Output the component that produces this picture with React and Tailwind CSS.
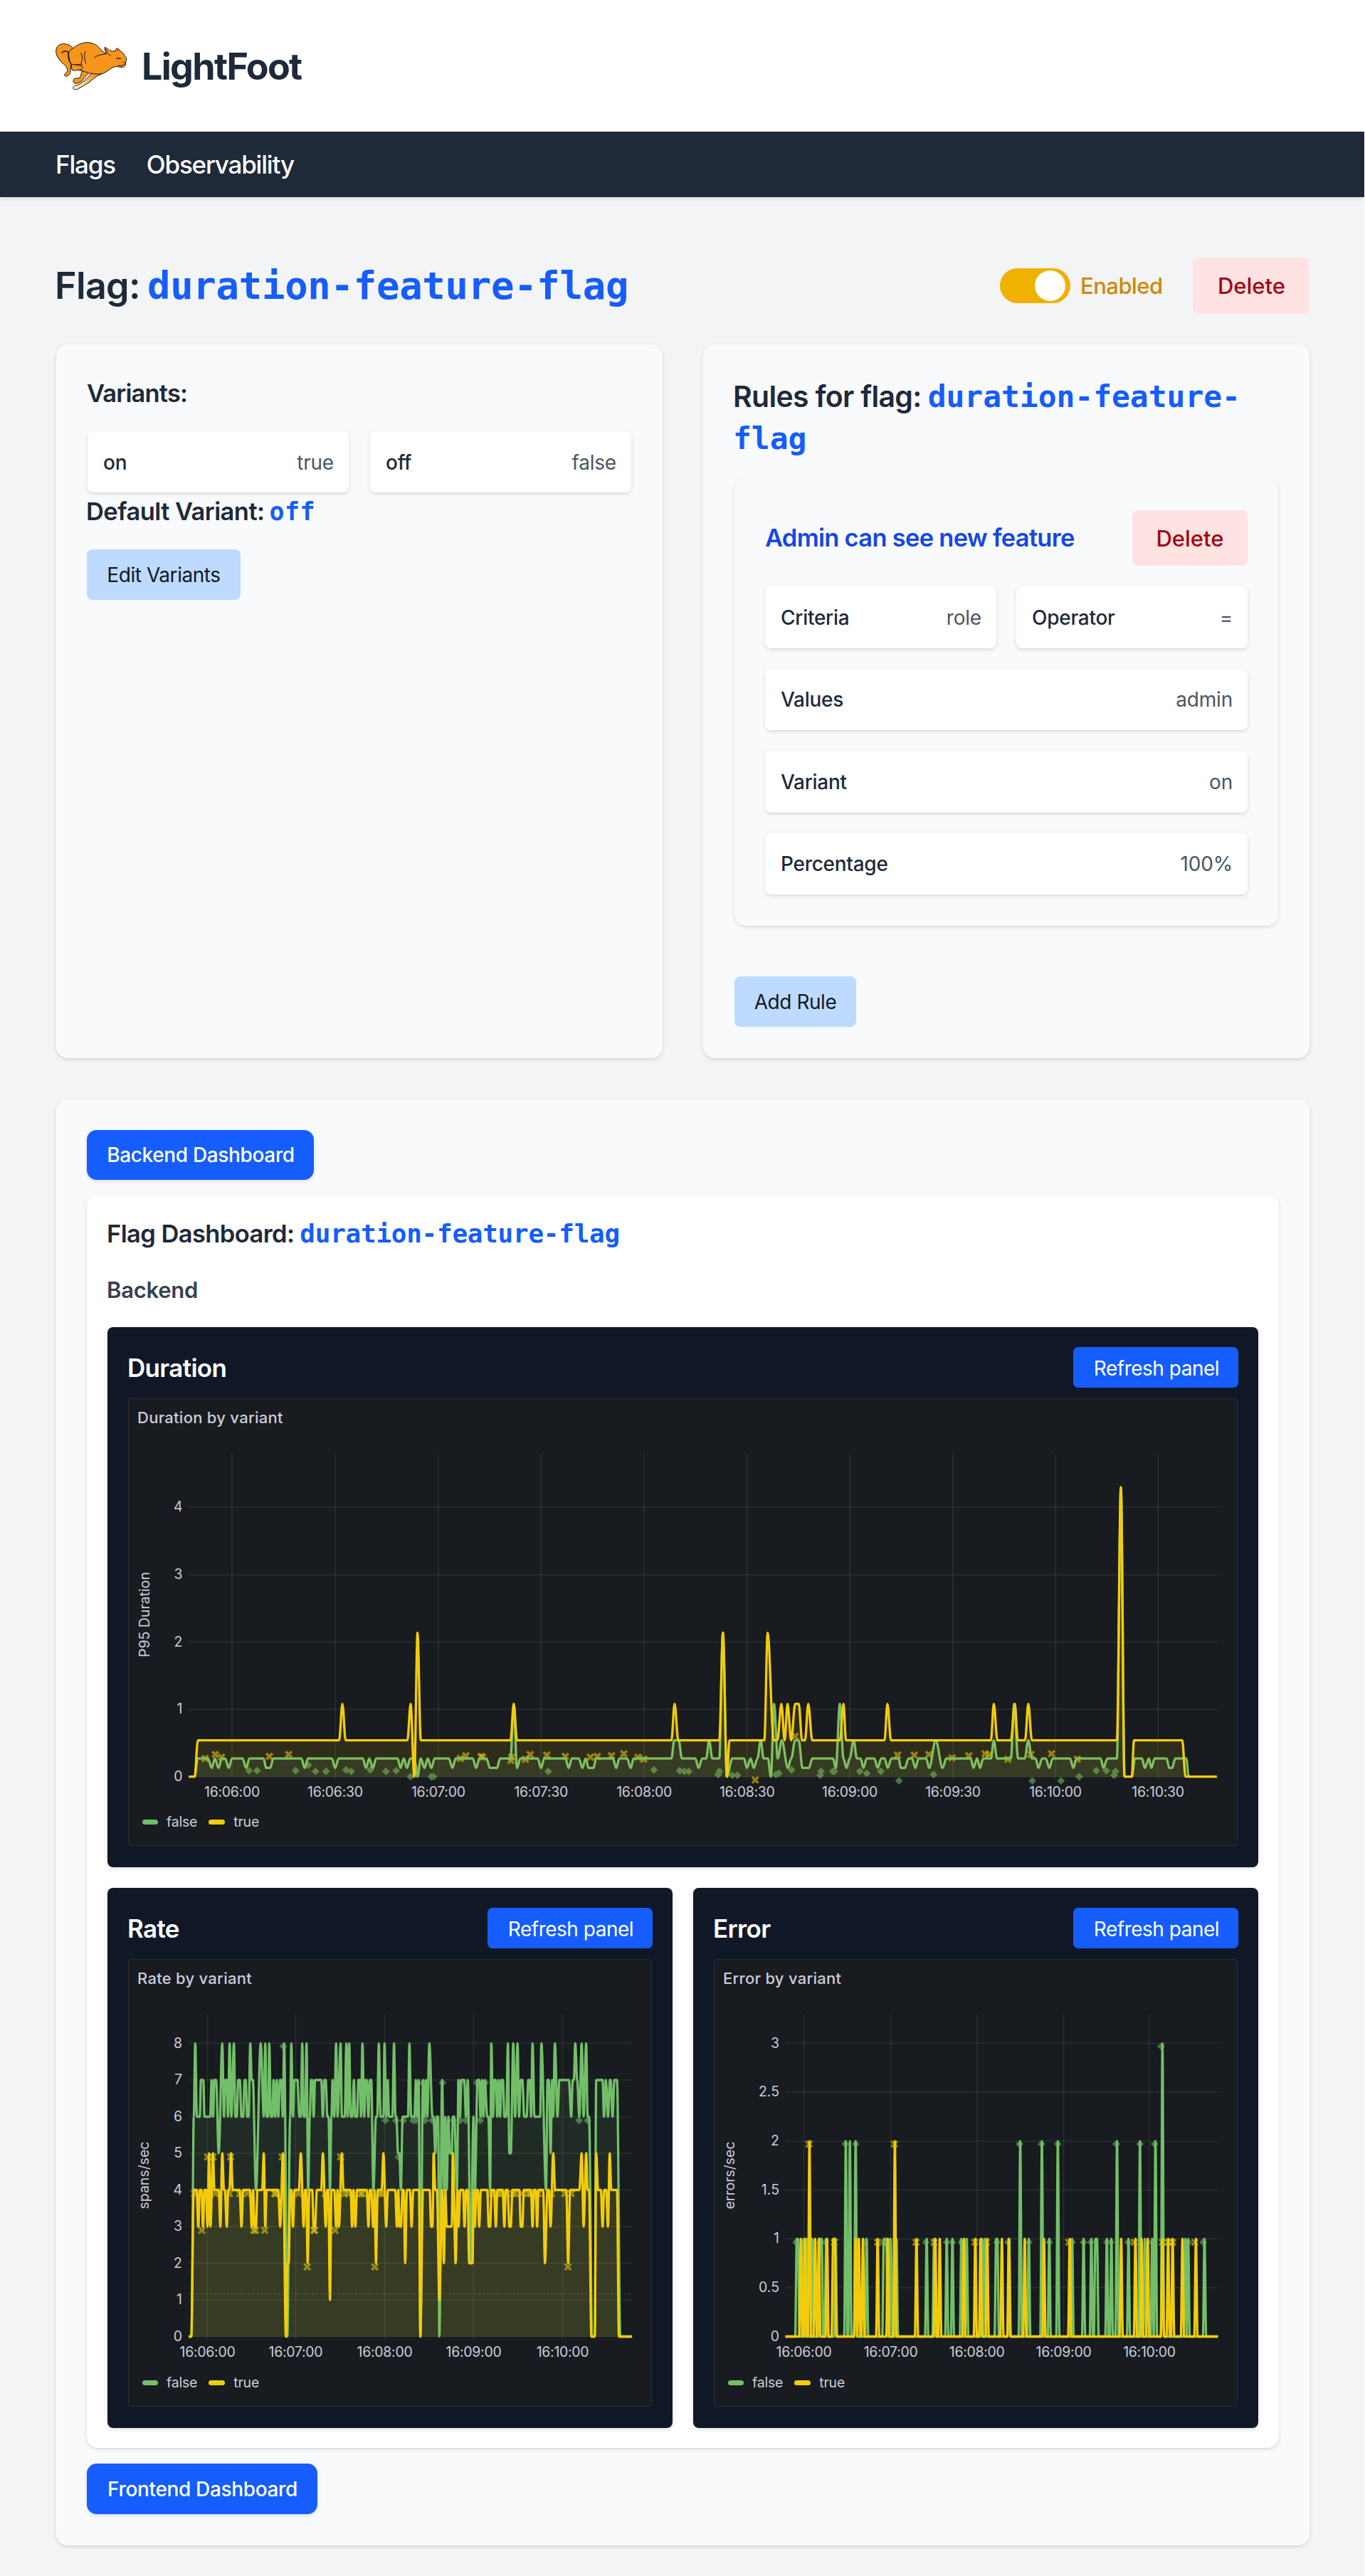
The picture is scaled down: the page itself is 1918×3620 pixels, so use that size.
import React from "react";

/* ---------- series data: "value:x" or "value:from-to" ---------- */

const durationFalse =
  "0:225-241 .27:250-278 .13:288 .27:297 .13:307 .27:316-325 .13:335 .27:344-373 .13:383 .27:392-431 .13:438-449 .27:458-535 .13:544 .27:553-619 .13:628 .27:638-704 .13:713 .27:722 .13:732 .27:741-800 .13:808 .27:817 .13:826 .27:835-846 0:855 .27:864 .13:874 .27:883 .13:893 .27:902-941 .13:951 .27:960-1007 .13:1016 .27:1026-1045 .13:1054-1074 .27:1082-1111 1.08:1120 .13:1129 .27:1138-1186 .13:1195 .27:1204-1262 .13:1271 .27:1280-1299 .13:1309 .27:1318 .13:1326-1340 .27:1346-1393 .13:1402 .27:1411-1432 .13:1442 .27:1450-1554 .54:1562-1574 .27:1583-1620 .13:1629 .27:1639-1650 .54:1658 .27:1667-1686 2.14:1696 0:1707 .27:1722-1754 .13:1762 .27:1772 .13:1781 .27:1791 .54:1800 .27:1808-1820 0:1828 1.08:1837 .27:1847 .54:1858 .13:1875 .27:1884 .54:1895-1905 .13:1915-1933 .27:1942-1999 .13:2007 1.08:2018 .27:2028 .13:2036 .27:2045 .54:2056 .27:2065-2075 .13:2083 .27:2092-2113 .13:2122 .27:2132-2141 .13:2150 .27:2160-2180 .13:2186-2197 .27:2207-2217 .13:2226 .27:2235-2256 .13:2264 .54:2282 .13:2301 .27:2311-2378 .13:2386 .27:2396 .13:2404 .27:2413-2434 .54:2442 .27:2451-2489 1.08:2498 .27:2509-2527 .54:2537 .27:2547-2557 .13:2565 .27:2575-2585 .13:2595 .27:2604-2652 .13:2661 .27:2670-2736 .13:2744 .27:2755-2781 4.3:2792 0:2802-2822 .27:2831-2850 .13:2858 .27:2869 .13:2876 .27:2885-2918 .13:2925-2933 .27:2942-2972 0:2979-3056";
const durationTrue =
  "0:225-241 .54:250-639 1.08:648 .54:657-827 1.08:836 0:846 2.14:855 .54:864-1111 1.08:1120 .54:1129-1554 1.08:1563 .54:1573-1686 2.14:1696 0:1707 .54:1714-1810 2.14:1819 .54:1836-1846 1.08:1857 .54:1866 1.08:1874 .54:1884 1.08:1895-1905 .54:1914-1922 1.08:1931 .54:1942-2018 1.08:2028 .54:2035-2141 1.08:2149 .54:2159-2434 1.08:2442 .54:2452-2489 1.08:2500 .54:2508-2528 1.08:2537 .54:2547-2781 4.3:2792 0:2802-2822 .54:2828-2961 0:2970-3056";
const durationFalseMarks =
  ".09:391 .09:413 .09:519 .17:554 .08:574 .08:603 .1:658 .08:672 .1:725 .08:768 .09:796 0:836 .13:850 0:893 0:899 .08:1215 .1:1506 .09:1577 .08:1590 .08:1602 .03:1683 .08:1686 .02:1722 .02:1736 .03:1842 .05:1850 .1:1885 .02:1964 .08:1966 .08:1999 .08:2003 .08:2073 .05:2092 .08:2131 -.06:2181 .03:2276 -.06:2548 -.06:2627 0:2677 .09:2724 .09:2752 .02:2773 .08:2777";
const durationTrueMarks =
  ".27:270 .33:298 .29:315 .3:447 .33:500 .27:973 .31:988 .3:1030 .29:1034 .24:1112 .29:1114 .26:1152 .33:1165 .32:1211 .3:1262 .29:1331 .3:1350 .31:1389 .34:1423 .29:1462 .26:1478 -.05:1785 .6:1895 .32:2177 .32:2223 .33:2263 .28:2327 .31:2373 .34:2418 .33:2430 .26:2481 .33:2544 .34:2601 .26:2672";

const rateFalse =
  "0:15-27 6:37 8:43 6:50-62 7:67-77 6:82-106 7:112 6:118 7:124-131 5:142 8:157 6:164 7:170-176 6:181 8:188 6:195 8:206 6:212-218 7:224-231 6:238-245 7:251-256 6:262-268 8:275 7:281-286 4:299 8:319 6:332 8:338 6:344-350 8:355 6:362-368 7:373 6:380 7:386 6:393 7:400-406 6:412 8:418 0:431 6:443 8:448 6:455 7:461-474 6:482-488 8:494 6:500-506 8:512 4:519 6:526 7:531-537 6:542 7:548-574 6:581 7:587-593 6:600-605 4:611 6:617 7:622 6:629 8:637 6:643 8:656 6:661-673 8:680 6:685 8:692 6:698-705 7:712 6:718-725 7:731-737 6:742 8:748 6:755 7:761-766 6:773 7:779-785 4:794 6:805-810 8:817 6:824-836 8:841 6:848 7:854 6:860-874 8:881 6:887-891 5:898-904 4:910 6:917-940 8:946 6:953-967 7:973 6:979 7:985 0:992 7:1003 6:1008 7:1015 6:1021 8:1030 6:1043-1048 5:1055 6:1061-1067 0:1072 7:1084 4:1091 6:1097 4:1103 6:1110 5:1117-1124 6:1129-1135 4:1146 7:1153 6:1159 7:1165-1177 6:1184 7:1192 2:1204 6:1216 4:1222 7:1233-1240 6:1246 7:1252 6:1258 7:1264 6:1274-1279 4:1286 8:1291 6:1298 7:1304-1310 6:1316 7:1322 6:1328 7:1334-1340 6:1346-1354 8:1361 5:1367-1373 8:1384 6:1391 8:1402 6:1408 7:1415-1422 6:1430-1440 7:1447-1453 6:1459 8:1465 6:1473-1497 8:1502 4:1522 7:1528-1534 5:1541 7:1547 6:1552 8:1559 6:1570 7:1578-1618 6:1628 7:1634-1639 8:1645 7:1653 6:1662 8:1672 6:1680 8:1691 6:1697-1703 0:1716-1727 7:1733-1760 6:1766 7:1774 6:1783 7:1791-1794 6:1802 7:1810-1821 0:1835-1884";
const rateTrue =
  "0:15-26 4:37-49 3:56 4:62-69 3:76 4:82-88 3:95 5:101 3:107 5:118 4:124-142 3:149 5:157 4:164-168 3:176 4:182-187 5:194 4:201-230 3:238 4:245-274 3:281 4:287 3:293-299 4:305-325 5:332 3:338 4:344-393 3:401 5:413 0:425-427 2:431-437 4:443-448 3:455 4:461-480 5:488 3:500 4:506-511 2:517 4:524-536 3:542-548 4:556-574 5:581 3:593 4:599-604 1:611 4:617-629 3:637 4:643 3:649 5:661 4:668-698 3:704 4:710 3:718 4:725-766 3:773 4:779-785 3:793-797 4:799 2:805 4:812-829 5:836 3:848 4:855-886 3:893 4:899 3:904-910 4:917-922 2:928 4:935-948 3:955 4:962-986 0:992 4:1003-1031 3:1037-1043 5:1048 4:1055-1062 1:1072 4:1084 2:1091 4:1097 3:1103-1124 5:1129 2:1141 4:1148 3:1153 4:1160-1172 3:1178 4:1185-1191 2:1198-1212 4:1216 3:1222 4:1228-1234 3:1240 4:1247-1274 3:1280-1286 4:1292-1303 3:1310 4:1317-1339 3:1346 4:1352-1360 3:1367-1373 4:1380-1409 3:1415-1422 4:1428-1458 3:1465 4:1471-1478 3:1484 4:1490-1510 2:1517 4:1528-1534 3:1541 5:1552 4:1560-1607 2:1615 4:1623-1662 5:1672 3:1680 5:1691 4:1697-1703 0:1713-1727 5:1733 4:1741-1753 3:1760 4:1767-1775 3:1783 5:1790 4:1797-1821 0:1829-1884";
const rateFalseMarks =
  "7.92:414 5.9:845 5.9:889 5.9:920 5.9:961 5.9:973 5.9:1012 5.9:1042 6.92:1001 6.92:1085 6.92:1160 6.92:1230 6.92:1266 5.9:1130 5.9:1160 5.9:1184 5.9:1244 4.9:900 3.9:1195 5.9:1661 5.9:1697";
const rateTrueMarks =
  "4.9:95 4.9:118 4.9:192 4.9:410 4.9:656 3.9:40 3.9:128 3.9:187 3.9:230 3.9:262 3.9:378 3.9:382 3.9:478 3.9:590 3.9:672 3.9:688 3.9:740 3.9:748 3.9:822 3.9:830 3.9:1290 3.9:1320 3.9:1330 3.9:1350 3.9:1380 3.9:1392 3.9:1420 3.9:1444 3.9:1455 3.9:1490 3.9:1545 3.9:1601 3.9:1628 2.9:71 2.9:290 2.9:297 2.9:336 2.9:544 2.9:545 2.9:632 1.9:515 1.9:800 1.9:1614";

const errorFalse =
  "1:278-281 1:295 1:302 1:316 1:335-339 1:350 1:373 2:398 2:408 2:422 1:449 1:491-497 1:508 1:522 1:596 1:614 1:645 1:659 1:681 1:694 1:731 1:738 1:766-769 1:798 2:825 1:846 2:878 1:896 2:917 1:952 1:980 1:999 1:1009-1013 1:1037 1:1048 2:1062 1:1090 2:1118 1:1130 1:1148 2:1156 3:1173 1:1229 1:1236 1:1276";
const errorTrue =
  "1:288 1:298 2:309 1:323 1:332 1:352 1:367-371 1:422 1:430 1:440 1:476 1:501 2:518 1:571 1:617 1:628 1:687 1:715 1:728 1:744 1:780 1:797 1:836 1:883 1:946 1:1072 1:1107 1:1122 1:1137 1:1173 1:1187 1:1198 1:1222 1:1255";
const errorFalseMarks =
  ".965:276 .965:295 .965:316 .965:335 .965:348 .965:445 .965:491 .965:594 .965:645 .965:659 .965:681 .965:731 .965:768 .965:795 .965:846 .965:896 .965:952 .965:980 .965:998 .965:1037 .965:1047 .965:1089 .965:1148 .965:1229 .965:1236 .965:1273 1.97:397 1.97:422 1.97:823 1.97:877 1.97:917 1.97:1060 1.97:1118 1.97:1154 2.97:1170";
const errorTrueMarks =
  "1.97:308 1.97:517 .965:370 .965:476 .965:500 .965:570 .965:614 .965:685 .965:714 .965:742 .965:944 .965:1104 .965:1173 .965:1187 .965:1198 .965:1252";

const parse = (s) =>
  s.split(" ").flatMap((token) => {
    const m = token.match(/^(-?[\d.]+):(\d+)(?:-(\d+))?$/);
    const v = Number(m[1]);
    return m[3] ? [[Number(m[2]), v], [Number(m[3]), v]] : [[Number(m[2]), v]];
  });

// Isolated samples that return to zero on both sides.
const spikes = (s, from, to) => {
  const pts = [[from, 0]];
  s.split(" ").forEach((token) => {
    const p = parse(token);
    pts.push([p[0][0] - 4, 0], ...p, [p[p.length - 1][0] + 4, 0]);
  });
  pts.push([to, 0]);
  return pts;
};

const charts = {
  duration: {
    title: "Duration by variant",
    axis: "P95 Duration",
    w: 1558,
    x: (v) => v / 1.96 - 30,
    zero: 531.7,
    unit: 94.6,
    left: 84.5,
    right: 1531,
    labelX: 76,
    yTicks: ["0", "1", "2", "3", "4"],
    xTicks: [
      ["16:06:00", 145.5], ["16:06:30", 290.4], ["16:07:00", 435.3], ["16:07:30", 579.7], ["16:08:00", 724.6],
      ["16:08:30", 869.2], ["16:09:00", 1013.5], ["16:09:30", 1158.5], ["16:10:00", 1302.5], ["16:10:30", 1446.6],
    ],
    series: [parse(durationFalse), parse(durationTrue)],
    marks: [parse(durationFalseMarks), parse(durationTrueMarks)],
    axisMid: 304,
  },
  rate: {
    title: "Rate by variant",
    axis: "spans/sec",
    w: 736,
    x: (v) => v / 3 + 80,
    zero: 530.5,
    unit: 51.5,
    left: 84.5,
    right: 709,
    labelX: 76,
    threshold: 470.5,
    yTicks: ["0", "1", "2", "3", "4", "5", "6", "7", "8"],
    xTicks: [["16:06:00", 111.5], ["16:07:00", 235.5], ["16:08:00", 360.5], ["16:09:00", 485.5], ["16:10:00", 610.5]],
    series: [parse(rateFalse), parse(rateTrue)],
    marks: [parse(rateFalseMarks), parse(rateTrueMarks)],
    axisMid: 304,
  },
  error: {
    title: "Error by variant",
    axis: "errors/sec",
    w: 736,
    x: (v) => v / 1.742 - 43,
    zero: 530.5,
    unit: 137.3,
    left: 100.5,
    right: 708.5,
    labelX: 92,
    yTicks: ["0", "0.5", "1", "1.5", "2", "2.5", "3"],
    xTicks: [["16:06:00", 126.5], ["16:07:00", 248.6], ["16:08:00", 369.7], ["16:09:00", 491.5], ["16:10:00", 612]],
    series: [spikes(errorFalse, 250, 1309), spikes(errorTrue, 250, 1309)],
    marks: [parse(errorFalseMarks), parse(errorTrueMarks)],
    axisMid: 304,
  },
};

const GREEN = "#73bf69";
const YELLOW = "#f2cc0c";

// Cubic segments with flat tangents, which round off peaks and plateaus.
const smooth = (pts) =>
  pts
    .map(([px, py], i) => {
      if (i === 0) return `M${px} ${py}`;
      const [qx, qy] = pts[i - 1];
      const k = (px - qx) * 0.35;
      return `C${(qx + k).toFixed(1)} ${qy.toFixed(1)} ${(px - k).toFixed(1)} ${py.toFixed(1)} ${px.toFixed(1)} ${py.toFixed(1)}`;
    })
    .join("");

function Chart({ c }) {
  const y = (v) => c.zero - v * c.unit;
  const d = c.series.map((pts) => smooth(pts.map(([px, v]) => [c.x(px), y(v)])));
  const [diamonds, crosses] = c.marks;
  return (
    <svg className="-mt-px -ml-[1.5px] block h-[627px] w-full overflow-visible font-[Inter,sans-serif]" viewBox={`0 0 ${c.w - 2} 627`} fill="none">
      <g stroke="rgb(240 250 255 / 0.09)" strokeWidth="1.5">
        {c.yTicks.map((t) => (
          <path key={t} d={`M${c.left} ${y(Number(t))}H${c.right}`} />
        ))}
        {c.xTicks.map(([t, px]) => (
          <path key={t} d={`M${px} 78V${c.zero + 5}`} />
        ))}
      </g>
      <g fill="#ccccdc" className="text-[19.5px]">
        {c.yTicks.map((t) => (
          <text key={t} x={c.labelX} y={y(Number(t)) + 6} textAnchor="end">{t}</text>
        ))}
        {c.xTicks.map(([t, px]) => (
          <text key={t} x={px} y={c.zero + 28.3} textAnchor="middle" letterSpacing="-0.3">{t}</text>
        ))}
        <text transform={`translate(29 ${c.axisMid}) rotate(-90)`} textAnchor="middle">{c.axis}</text>
      </g>
      <g fill={GREEN} opacity="0.55">
        {diamonds.map(([px, v], i) => (
          <path key={i} d={`M${c.x(px) - 5.5} ${y(v)}l5.5-5.5 5.5 5.5-5.5 5.5z`} />
        ))}
      </g>
      <g stroke={YELLOW} strokeWidth="3.6">
        {crosses.map(([px, v], i) => (
          <path key={i} opacity="0.55" d={`M${c.x(px) - 4.3} ${y(v) - 4.3}l8.6 8.6m0-8.6l-8.6 8.6`} />
        ))}
      </g>
      {[GREEN, YELLOW].map((color, i) => (
        <React.Fragment key={color}>
          <path d={`${d[i]}V${c.zero}H${c.left}z`} fill={color} fillOpacity="0.1" />
          <path d={d[i]} stroke={color} strokeWidth="3.3" strokeLinejoin="round" />
        </React.Fragment>
      ))}
      {c.threshold && <path d={`M${c.left} ${c.threshold}H${c.right}`} stroke="#8e8e8e" strokeOpacity="0.5" strokeDasharray="3 3" />}
    </svg>
  );
}

function Panel({ heading, chart, className }) {
  return (
    <section className={`h-[759px] rounded-lg bg-[#101828] px-[29px] pt-7 shadow-[0_2px_6px_rgba(0,0,0,0.12)] ${className}`}>
      <div className="flex h-[57px] items-center justify-between">
        <h4 className="-ml-px pt-0.5 text-[35px] leading-none font-semibold tracking-[-0.67px] text-white">{heading}</h4>
        <button className="-mr-px flex h-[57px] w-[232px] items-center justify-center rounded-[7px] bg-[#155dfc] pt-0.5 pl-0.5 text-[28px] leading-none tracking-[-0.49px] whitespace-nowrap text-white">
          Refresh panel
        </button>
      </div>
      <div className="relative mt-[15px] h-[629px] rounded-[4px] border border-[#2c2f35] bg-[#181b1f]">
        <div className="absolute top-[13px] left-3 text-[22px] leading-[26px] font-medium tracking-[0.27px] text-[#ccccdc]">{chart.title}</div>
        <Chart c={chart} />
        <div className="absolute top-[580px] left-[19px] flex items-center text-[19.5px] leading-[28px] tracking-[-0.2px] text-[#ccccdc]">
          <span className="mr-3 h-[7px] w-[22px] rounded-full bg-[#73bf69]" />
          false
          <span className="mr-3 ml-4 h-[7px] w-[23px] rounded-full bg-[#f2cc0c]" />
          true
        </div>
      </div>
    </section>
  );
}

const Code = ({ children, className }) => (
  <code className={`font-['DejaVu_Sans_Mono',monospace] leading-[0] font-bold text-[#155dfc] ${className}`}>{children}</code>
);

const cardShadow = "shadow-[0_2px_6px_rgba(0,0,0,0.1),0_2px_4px_-2px_rgba(0,0,0,0.1)]";

function Field({ label, value, className = "" }) {
  return (
    <div className={`flex items-center justify-between rounded-lg bg-white px-[22px] pt-px text-[28px] leading-none ${cardShadow} ${className}`}>
      <span className="font-medium tracking-[-0.28px] text-[#1e2939]">{label}</span>
      <span className="-mr-px tracking-[-0.2px] text-[#4a5565]">{value}</span>
    </div>
  );
}

function SoftButton({ children, className }) {
  return (
    <button className={`flex h-[71px] items-center justify-center rounded-lg bg-[#bedbff] pt-px text-[28px] leading-none tracking-[-0.45px] text-[#101828] ${className}`}>
      {children}
    </button>
  );
}

function DeleteButton({ className }) {
  return (
    <button className={`flex items-center justify-center rounded-lg bg-[#ffe2e2] text-[31px] leading-none font-medium text-[#9f0712] ${className}`}>
      Delete
    </button>
  );
}

function TabButton({ children, className }) {
  return (
    <button className={`flex items-center justify-center rounded-[14px] bg-[#155dfc] pl-px text-[28px] leading-none font-medium tracking-[-0.35px] text-white ${cardShadow} ${className}`}>
      {children}
    </button>
  );
}

function CatLogo() {
  return (
    <svg className="h-[72px] w-[104px]" viewBox="50 50 312 216" fill="none" strokeLinecap="round" strokeLinejoin="round">
      <defs>
        <linearGradient id="leg" x1="130" y1="255" x2="215" y2="195" gradientUnits="userSpaceOnUse">
          <stop stopColor="#fdf3c8" />
          <stop offset="0.45" stopColor="#fcd58c" />
          <stop offset="1" stopColor="#f7941e" />
        </linearGradient>
      </defs>
      <g stroke="#111" strokeWidth="3">
        <path fill="url(#leg)" d="M205 188C192 205 170 225 150 236C136 240 126 243 127 251C128 258 142 258 152 251C175 240 198 225 213 211C225 201 236 195 247 191Z" />
        <path
          fill="#f7941e"
          fillRule="evenodd"
          d="M127 82C115 68 100 63 84 64C64 66 54 80 55 97C57 120 72 136 87 149C98 158 104 168 103 178C101 185 90 190 91 197C94 203 106 200 111 193C117 185 115 170 119 150C121 155 119 165 123 174C130 179 140 175 150 174L166 178C160 188 160 202 154 208C144 210 132 207 129 213C126 222 129 231 137 231C150 231 163 222 171 213C180 202 184 192 198 187C212 190 235 193 250 190C268 184 283 167 302 160C312 158 322 162 333 163C343 163 350 154 348 146C352 142 347 137 351 134C354 128 352 121 345 115C342 106 336 99 327 95C322 88 317 81 312 83C306 85 303 93 305 96L285 93C277 90 268 80 261 78C260 85 262 92 267 106C257 101 250 94 241 85C230 70 213 60 190 58C165 57 142 70 127 82ZM107 100C98 90 81 92 79 104C87 94 98 95 107 97C108 115 111 135 119 150C109 138 104 119 107 100Z"
        />
        <path d="M127 82C115 88 107 99 107 114C108 130 112 142 120 150M120 150C130 152 150 150 166 161C170 168 162 174 151 174M138 152C148 149 160 149 166 154M160 103C168 117 168 133 158 151M179 95C173 108 174 126 181 146M166 178C172 180 180 184 190 184M267 106C243 110 226 113 217 122M261 82L273 103C276 107 280 111 285 114M318 155C330 158 340 156 345 149M337 139C342 144 345 145 347 142" />
        <path strokeWidth="4" d="M312 125L328 126" />
      </g>
      <path fill="#f15a24" d="M306 95C304 87 313 80 319 86L325 95Z" />
    </svg>
  );
}

export default function App() {
  return (
    <div className="min-h-[3620px] overflow-hidden border-r border-white bg-[#f3f4f6] font-[Inter,sans-serif]">
      <header className="flex h-[185px] items-center bg-white pl-[77px]">
        <CatLogo />
        <h1 className="ml-[18px] pt-0.5 text-[52px] leading-none font-bold tracking-[-1.7px] text-[#1e2939]">LightFoot</h1>
      </header>
      <nav className="relative flex h-[92px] items-center gap-[44px] bg-[#1e2939] pl-[78px] text-[35px] leading-none font-medium tracking-[-1.2px] text-white shadow-[0_2px_6px_rgba(0,0,0,0.12)]">
        <a>Flags</a>
        <a>Observability</a>
      </nav>

      <main className="ml-[79px] w-[1761px] pt-[85px]">
        <div className="flex h-[79px] items-center justify-between">
          <h2 className="-ml-0.5 text-[52px] leading-[60px] font-semibold tracking-[-0.64px] text-[#1e2939]">
            Flag:<Code className="ml-[10px] text-[54px] tracking-[-0.31px]">duration-feature-flag</Code>
          </h2>
          <div className="flex items-center">
            <div className="flex h-[49px] w-[99px] items-center justify-end rounded-full bg-[#f0b100] pr-[7px]">
              <span className="size-[43px] rounded-full bg-white" />
            </div>
            <span className="ml-3.5 w-[158px] text-[31px] leading-none font-medium tracking-[-0.52px] text-[#d08700]">Enabled</span>
            <DeleteButton className="h-[79px] w-[164px] pl-px" />
          </div>
        </div>

        <div className="mt-[43px] flex justify-between">
          <section className={`h-[1003px] w-[852px] rounded-2xl bg-[#f9fafb] px-11 pt-11 ${cardShadow}`}>
            <h3 className="-ml-px text-[34.5px] leading-[49px] font-semibold tracking-[-0.85px] text-[#1e2939]">Variants:</h3>
            <div className="mt-[29px] grid grid-cols-2 gap-[30px]">
              <Field label="on" value="true" className="h-[86px]" />
              <Field label="off" value="false" className="h-[86px]" />
            </div>
            <h3 className="mt-0.5 -ml-0.5 text-[34.5px] leading-[49px] font-semibold tracking-[-0.57px] text-[#1e2939]">
              Default Variant:<Code className="ml-[7px] text-[35px] tracking-[0.4px]">off</Code>
            </h3>
            <SoftButton className="mt-[29px] -ml-px w-[216px]">Edit Variants</SoftButton>
          </section>

          <section className={`h-[1003px] w-[852px] rounded-2xl bg-[#f9fafb] px-11 pt-11 ${cardShadow}`}>
            <h3 className="-ml-0.5 text-[41px] leading-[59px] font-semibold tracking-[-0.7px] text-[#1e2939]">
              Rules for flag:<Code className="ml-[9px] text-[43px] tracking-[-0.05px]">duration-feature-<br />flag</Code>
            </h3>
            <div className={`mt-7 h-[627px] rounded-2xl bg-[#f9fafb] px-[43px] pt-[43px] ${cardShadow}`}>
              <div className="flex items-center justify-between">
                <h4 className="text-[34.5px] leading-none font-semibold tracking-[-0.73px] text-[#1447e6]">Admin can see new feature</h4>
                <DeleteButton className="h-[78px] w-[162px]" />
              </div>
              <div className="mt-[29px] grid grid-cols-2 gap-x-7 gap-y-[29px]">
                <Field label="Criteria" value="role" className="h-[86.5px]" />
                <Field label="Operator" value="=" className="h-[86.5px]" />
                <Field label="Values" value="admin" className="col-span-2 h-[86.5px]" />
                <Field label="Variant" value="on" className="col-span-2 h-[86.5px]" />
                <Field label="Percentage" value="100%" className="col-span-2 h-[86.5px]" />
              </div>
            </div>
            <SoftButton className="mt-[71px] w-[171px]">Add Rule</SoftButton>
          </section>
        </div>

        <section className={`mt-[58px] h-[2032px] rounded-2xl bg-[#f9fafb] px-[43px] pt-[43px] ${cardShadow}`}>
          <TabButton className="h-[70px] w-[319px]">Backend Dashboard</TabButton>
          <div className={`mt-[21px] h-[1761px] rounded-2xl bg-white px-[29px] pt-[29px] ${cardShadow}`}>
            <h3 className="-ml-px text-[34.5px] leading-[51px] font-semibold tracking-[-0.6px] text-[#1e2939]">
              Flag Dashboard:<Code className="ml-[8px] text-[36px] tracking-[-0.27px]">duration-feature-flag</Code>
            </h3>
            <h4 className="mt-[29px] -ml-px text-[31px] leading-[50px] font-semibold tracking-[-0.26px] text-[#364153]">Backend</h4>
            <div className="mt-[27px] flex flex-wrap justify-between gap-y-[29px]">
              <Panel heading="Duration" chart={charts.duration} className="w-full" />
              <Panel heading="Rate" chart={charts.rate} className="w-[794px]" />
              <Panel heading="Error" chart={charts.error} className="w-[794px]" />
            </div>
          </div>
          <TabButton className="mt-[22px] h-[71px] w-[324px]">Frontend Dashboard</TabButton>
        </section>
      </main>
    </div>
  );
}
